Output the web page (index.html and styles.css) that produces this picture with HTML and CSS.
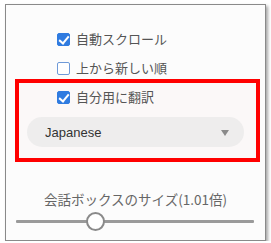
FILE: index.html
```html
<!DOCTYPE html>
<html lang="ja">
    <head>
        <meta charset="UTF-8">
        <meta name="viewport" content="width=device-width, initial-scale=1.0">
        <title>設定</title>
        <link rel="stylesheet" href="styles.css">
    </head>
    <body>
        <div class="panel">
            <div class="options">
                <label class="option">
                    <input type="checkbox" checked>
                    <span>自動スクロール</span>
                </label>
                <label class="option">
                    <input type="checkbox">
                    <span>上から新しい順</span>
                </label>
            </div>
            <div class="highlight">
                <label class="option">
                    <input type="checkbox" checked>
                    <span>自分用に翻訳</span>
                </label>
                <div class="select-wrap">
                    <select class="lang">
                        <option>Japanese</option>
                        <option>English</option>
                    </select>
                </div>
            </div>
            <div class="size-label">会話ボックスのサイズ(1.01倍)</div>
            <input class="size-range" type="range" min="0.5" max="2.1" step="0.01" value="1.01">
        </div>
    </body>
</html>
```

FILE: styles.css
```css
*{
    margin: 0;
    padding: 0;
    box-sizing: border-box;
}
body{
    background-color: #ffffff;
    font-family: "Noto Sans CJK JP", "Liberation Sans", sans-serif;
    font-size: 13px;
    color: #555555;
}
.panel{
    margin: 4px 0 0 5px;
    width: 261px;
    height: 237px;
    border: 1px solid #8a8a8a;
    background-color: #fcfcfc;
    box-shadow: 2px 2px 3px rgba(0, 0, 0, 0.35);
}
.options{
    display: flex;
    flex-direction: column;
    gap: 7px;
    padding: 23px 0 0 51px;
}
.option{
    display: flex;
    align-items: center;
    gap: 6px;
    height: 22px;
    line-height: 22px;
}
.option input{
    -webkit-appearance: none;
    appearance: none;
    width: 13px;
    height: 13px;
    border: 1px solid #6f9ad8;
    border-radius: 2px;
    background-color: #ffffff;
    position: relative;
}
.option input:checked{
    background-color: #2f7be0;
    border-color: #2f7be0;
}
.option input:checked::after{
    content: "";
    position: absolute;
    left: 3px;
    top: 0px;
    width: 4px;
    height: 8px;
    border: solid #ffffff;
    border-width: 0 2px 2px 0;
    transform: rotate(40deg);
}
.highlight{
    margin: 0 5px 0 9px;
    border: 4px solid #ff0000;
    background-color: #fbf8f8;
    padding: 3px 12px 11px 8px;
}
.highlight .option{
    padding-left: 30px;
}
.select-wrap{
    position: relative;
    margin-top: 9px;
}
.select-wrap::after{
    content: "";
    position: absolute;
    right: 15px;
    top: 13px;
    border-left: 4px solid transparent;
    border-right: 4px solid transparent;
    border-top: 6px solid #8a8a8a;
}
.lang{
    -webkit-appearance: none;
    appearance: none;
    width: 100%;
    height: 30px;
    border: none;
    outline: none;
    border-radius: 15px;
    background-color: #eeeded;
    padding: 0 18px;
    font-family: "Liberation Sans", Arial, sans-serif;
    font-size: 13px;
    color: #333333;
}
.size-label{
    margin-top: 27px;
    text-align: center;
    line-height: 20px;
    font-size: 13.5px;
    color: #666666;
}
.size-range{
    -webkit-appearance: none;
    appearance: none;
    display: block;
    margin: 2px 0 0 10px;
    width: 238px;
    height: 20px;
    background: transparent;
    outline: none;
}
.size-range::-webkit-slider-runnable-track{
    height: 3px;
    background-color: #9a9a9a;
    border-radius: 1px;
}
.size-range::-webkit-slider-thumb{
    -webkit-appearance: none;
    width: 19px;
    height: 19px;
    margin-top: -8px;
    border-radius: 50%;
    border: 2px solid #8a8a8a;
    background-color: #ffffff;
}
```
